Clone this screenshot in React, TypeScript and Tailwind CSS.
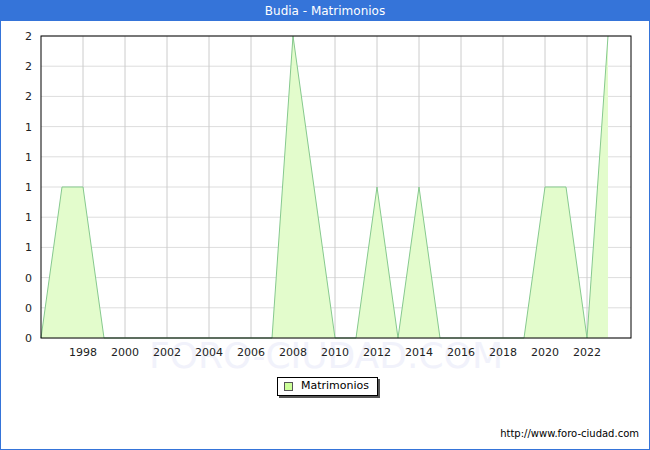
const years = Array.from({ length: 28 }, (_, i) => 1996 + i)
const values = [0, 1, 1, 0, 0, 0, 0, 0, 0, 0, 0, 0, 2, 1, 0, 0, 1, 0, 1, 0, 0, 0, 0, 0, 1, 1, 0, 2]
const yLabels = ['2', '2', '2', '1', '1', '1', '1', '1', '0', '0', '0']

const L = 40
const R = 630
const T = 35
const B = 337
const xOf = (y: number) => L + (y - 1996) * 21
const yOf = (v: number) => B - (v / 2) * (B - T)

function Chart() {
  const pts = years.map((y, i) => `${xOf(y)},${yOf(values[i])}`).join(' ')
  const area = `${xOf(1996)},${B} ${pts} ${xOf(2023)},${B}`
  return (
    <svg width="648" height="370" className="absolute left-0 top-0" style={{ fontFamily: 'DejaVu Sans, sans-serif' }}>
      <text x="325" y="367" textAnchor="middle" fontSize="36" fill="#f1f2fb" aria-hidden="true">FORO-CIUDAD.COM</text>
      {yLabels.map((_, i) => {
        const y = T + (i * (B - T)) / 10
        return <line key={i} x1={L} x2={R} y1={y} y2={y} stroke="#dddddd" />
      })}
      {years.filter((y) => y % 2 === 0 && y > 1996).map((y) => (
        <line key={y} x1={xOf(y)} x2={xOf(y)} y1={T} y2={B} stroke="#cccccc" />
      ))}
      <polygon points={area} fill="#e3fccc" />
      <polyline points={pts} fill="none" stroke="#86c98e" strokeWidth="1" />
      <rect x={L} y={T} width={R - L} height={B - T} fill="none" stroke="#000" />
      {yLabels.map((t, i) => (
        <text key={i} x="31" y={T + (i * (B - T)) / 10 + 4} textAnchor="end" fontSize="11" fill="#222">{t}</text>
      ))}
      {years.filter((y) => y % 2 === 0 && y > 1996).map((y) => (
        <text key={y} x={xOf(y)} y="355" textAnchor="middle" fontSize="11" fill="#222">{y}</text>
      ))}
    </svg>
  )
}

export default function App() {
  return (
    <div className="relative flex h-[450px] w-[650px] flex-col border border-[#3574d9] bg-white" style={{ fontFamily: 'DejaVu Sans, sans-serif' }}>
      <Chart />
      <div className="relative flex h-[20px] items-center justify-center bg-[#3574d9] text-[12px] text-white">Budia - Matrimonios</div>
      <div className="relative flex-1">
        <div className="absolute left-[276px] top-[356px] flex h-[19px] items-center gap-[8px] border border-black bg-white pl-[6px] pr-[8px] text-[11px] text-black shadow-[2px_2px_0_#555]">
          <span className="h-[9px] w-[9px] border border-[#555] bg-[#ccff99]" />
          Matrimonios
        </div>
        <div className="absolute right-[10px] bottom-[8px] text-[10px] text-black">http://www.foro-ciudad.com</div>
      </div>
    </div>
  )
}
